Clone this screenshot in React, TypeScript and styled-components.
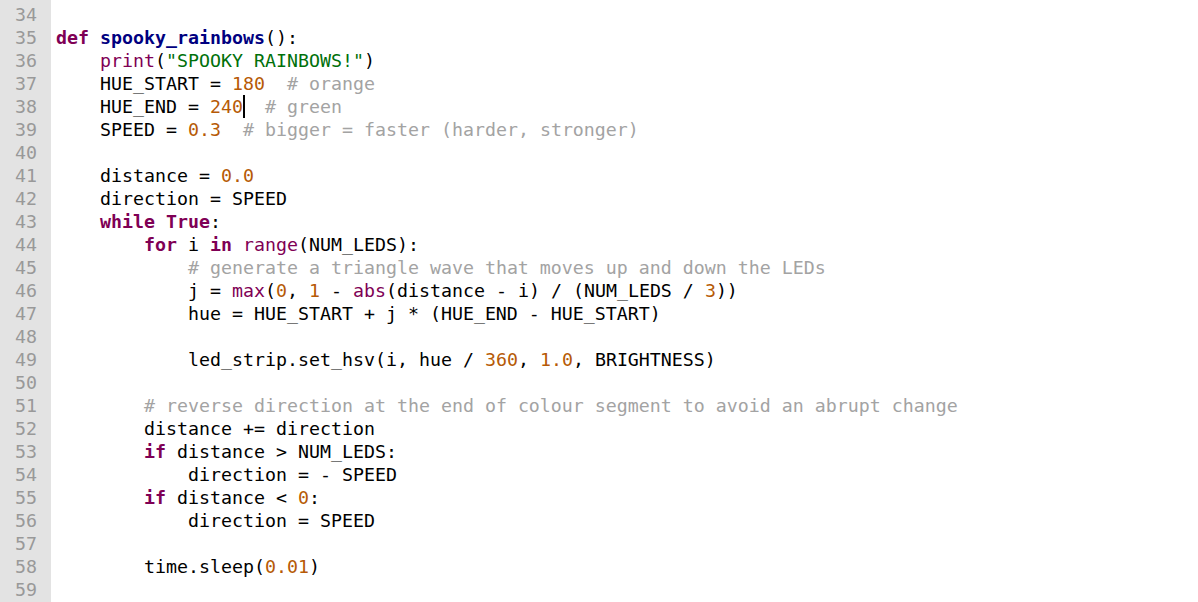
import React from "react";
import styled, { createGlobalStyle, css } from "styled-components";

const GlobalStyle = createGlobalStyle`
  html, body { margin: 0; padding: 0; background: #ffffff; }
  body { overflow: hidden; }
`;

type Kind = "plain" | "kw" | "builtin" | "fn" | "str" | "num" | "com";
type Tok = [Kind, string];

const mono = `"DejaVu Sans Mono", "Liberation Mono", monospace`;

const Editor = styled.div`
  display: flex;
  height: 100vh;
  width: 100vw;
  font-family: ${mono};
  font-size: 18.27px;
  line-height: 23px;
`;

const Gutter = styled.div`
  width: 51px;
  flex: 0 0 51px;
  background: #e3e3e3;
  padding-top: 3px;
  box-sizing: border-box;
  display: flex;
  flex-direction: column;
  align-items: flex-end;
  padding-right: 14px;
  color: #999999;
`;

const LineNo = styled.div`
  height: 23px;
`;

const Code = styled.div`
  flex: 1;
  padding-top: 3px;
  padding-left: 5px;
  display: flex;
  flex-direction: column;
`;

const Line = styled.div`
  height: 23px;
  white-space: pre;
  color: #000000;
`;

const Token = styled.span<{ $kind: Kind }>`
  ${({ $kind }) => {
    switch ($kind) {
      case "kw":
        return css`color: #7f0055; font-weight: bold;`;
      case "builtin":
        return css`color: #7f0055;`;
      case "fn":
        return css`color: #000080; font-weight: bold;`;
      case "str":
        return css`color: #00700a;`;
      case "num":
        return css`color: #b65a06;`;
      case "com":
        return css`color: #a3a3a3;`;
      default:
        return css`color: #000000;`;
    }
  }}
`;

const Caret = styled.span`
  display: inline-block;
  width: 2px;
  height: 23px;
  margin-right: -2px;
  background: #000000;
  vertical-align: top;
`;

const P = (s: string): Tok => ["plain", s];
const K = (s: string): Tok => ["kw", s];
const B = (s: string): Tok => ["builtin", s];
const F = (s: string): Tok => ["fn", s];
const S = (s: string): Tok => ["str", s];
const N = (s: string): Tok => ["num", s];
const C = (s: string): Tok => ["com", s];
const CARET: Tok = ["plain", "\u0000caret"];

const lines: Tok[][] = [
  [],
  [K("def"), P(" "), F("spooky_rainbows"), P("():")],
  [P("    "), B("print"), P("("), S('"SPOOKY RAINBOWS!"'), P(")")],
  [P("    HUE_START = "), N("180"), P("  "), C("# orange")],
  [P("    HUE_END = "), N("240"), CARET, P("  "), C("# green")],
  [P("    SPEED = "), N("0.3"), P("  "), C("# bigger = faster (harder, stronger)")],
  [],
  [P("    distance = "), N("0.0")],
  [P("    direction = SPEED")],
  [P("    "), K("while"), P(" "), K("True"), P(":")],
  [P("        "), K("for"), P(" i "), K("in"), P(" "), B("range"), P("(NUM_LEDS):")],
  [P("            "), C("# generate a triangle wave that moves up and down the LEDs")],
  [P("            j = "), B("max"), P("("), N("0"), P(", "), N("1"), P(" - "), B("abs"), P("(distance - i) / (NUM_LEDS / "), N("3"), P("))")],
  [P("            hue = HUE_START + j * (HUE_END - HUE_START)")],
  [],
  [P("            led_strip.set_hsv(i, hue / "), N("360"), P(", "), N("1.0"), P(", BRIGHTNESS)")],
  [],
  [P("        "), C("# reverse direction at the end of colour segment to avoid an abrupt change")],
  [P("        distance += direction")],
  [P("        "), K("if"), P(" distance > NUM_LEDS:")],
  [P("            direction = - SPEED")],
  [P("        "), K("if"), P(" distance < "), N("0"), P(":")],
  [P("            direction = SPEED")],
  [],
  [P("        time.sleep("), N("0.01"), P(")")],
  [],
];

export default function App() {
  return (
    <>
      <GlobalStyle />
      <Editor>
        <Gutter>
          {lines.map((_, i) => (
            <LineNo key={i}>{34 + i}</LineNo>
          ))}
        </Gutter>
        <Code>
          {lines.map((toks, i) => (
            <Line key={i}>
              {toks.length === 0
                ? " "
                : toks.map(([kind, text], j) =>
                    text === "\u0000caret" ? (
                      <Caret key={j} />
                    ) : (
                      <Token key={j} $kind={kind}>
                        {text}
                      </Token>
                    )
                  )}
            </Line>
          ))}
        </Code>
      </Editor>
    </>
  );
}
